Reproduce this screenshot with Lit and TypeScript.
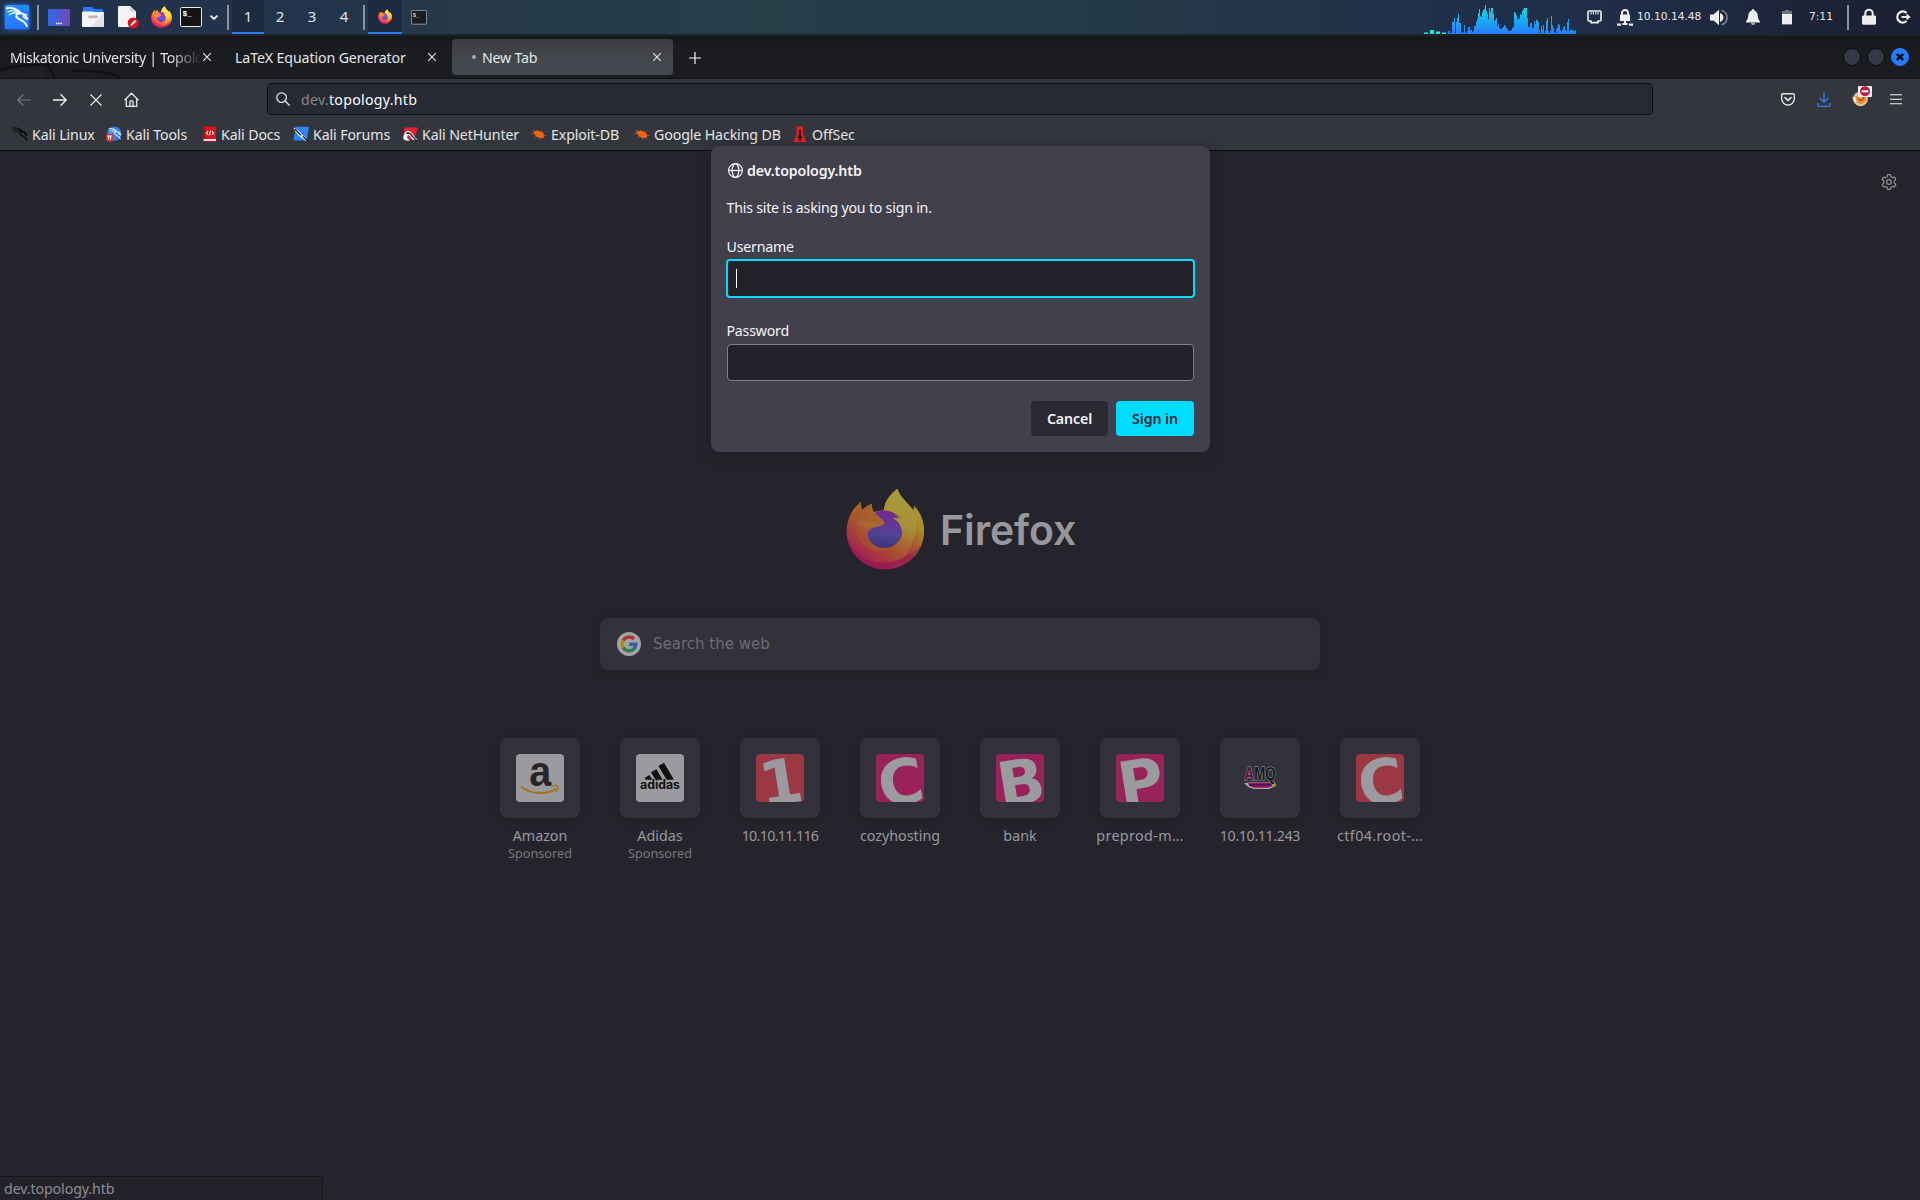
import { LitElement, html, svg, css } from "lit";
import { customElement } from "lit/decorators.js";
import { classMap } from "lit/directives/class-map.js";

const firefoxMark = (id: string) => svg`
  <defs>
    <linearGradient id="${id}-body" x1="0.85" y1="0.1" x2="0.25" y2="0.95">
      <stop offset="0" stop-color="#fff04e"></stop><stop offset="0.3" stop-color="#ffc62a"></stop>
      <stop offset="0.55" stop-color="#ff8a2b"></stop><stop offset="0.8" stop-color="#ff4a4a"></stop>
      <stop offset="1" stop-color="#f0137c"></stop>
    </linearGradient>
    <linearGradient id="${id}-globe" x1="0.5" y1="0" x2="0.4" y2="1">
      <stop offset="0" stop-color="#a82ed6"></stop><stop offset="0.6" stop-color="#7355e0"></stop>
      <stop offset="1" stop-color="#4a3fa8"></stop>
    </linearGradient>
    <linearGradient id="${id}-flame" x1="0.6" y1="0" x2="0.4" y2="1">
      <stop offset="0" stop-color="#fff04e"></stop><stop offset="0.6" stop-color="#ffd63c"></stop>
      <stop offset="1" stop-color="#ff7a35"></stop>
    </linearGradient>
    <linearGradient id="${id}-face" x1="0.9" y1="0" x2="0.1" y2="1">
      <stop offset="0" stop-color="#ffa02e"></stop><stop offset="0.5" stop-color="#ff8030"></stop>
      <stop offset="1" stop-color="#ff4f45"></stop>
    </linearGradient>
  </defs>
  <path fill="url(#${id}-body)" d="M122 94C121 104 122 112 126 119C134 110 143 104 155 101C154 110 156 118 160 125L192 119C194 90 210 74 232 55C240 82 262 96 281 120L283 106C303 128 313 154 313 184C313 248 261 299 196 299C131 299 78 248 78 185C78 146 94 116 122 94Z"></path>
  <path fill="#e0106f" d="M79 195C92 240 122 272 166 278C222 285 276 262 303 222C288 268 248 299 196 299C132 299 83 254 79 195Z" opacity="0.75"></path>
  <circle fill="url(#${id}-globe)" cx="192" cy="178" r="57"></circle>
  <path fill="url(#${id}-flame)" d="M192 120C193 91 210 74 232 55C240 82 265 97 281 124C294 148 298 172 287 200C276 226 256 240 220 242C240 228 250 208 246 184C243 166 233 150 218 145C226 141 238 142 245 147C235 127 215 119 192 120Z"></path>
  <path fill="url(#${id}-body)" d="M281 106C303 128 313 154 313 184C312 222 290 258 248 270C278 236 291 192 290 136C287 128 283 116 281 106Z" opacity="0.7"></path>
  <path fill="url(#${id}-face)" d="M122 94C121 104 122 112 126 119C134 110 143 104 155 101C153 112 156 120 163 128C174 140 187 147 195 159C186 168 172 169 157 174C144 179 138 190 145 206C152 226 176 238 204 235C190 250 150 248 125 220C105 198 96 168 108 154C98 145 104 110 122 94Z"></path>
  <path fill="#ffbd45" opacity="0.4" d="M108 157C120 149 142 150 159 158C172 163 184 162 194 159C180 171 164 168 150 175C134 174 116 170 108 157Z"></path>
`;

const dragon = (color: string) => svg`
  <g fill="none" stroke="${color}" stroke-linecap="round" stroke-linejoin="round">
    <path stroke-width="2" d="M1.8 3.6C5 1.8 12 3.6 16.5 8.2"></path>
    <path stroke-width="1.2" d="M3 7.2C7 5 11.5 5.7 16 9M4.5 10.3C7.5 7.8 11 7.6 14.5 9.4"></path>
    <path stroke-width="2" d="M16.5 8.2C14 8.2 11.6 9.6 11.8 12C12.4 15.8 21 14.6 22.6 22"></path>
    <path stroke-width="1.9" d="M16 8.7C19.6 8.4 20.2 11.4 23.4 14"></path>
    <path stroke-width="1.3" d="M19.5 10L18.8 12.3L22.8 15.2M19 9L22.4 10.5"></path>
  </g>`;

const terminal = html`<svg viewBox="0 0 22 20">
  <rect x="0.5" y="0.5" width="21" height="19" rx="1.2" fill="#141414" stroke="#e9e9e9"></rect>
  <text class="prompt" x="2.4" y="9.4">$_</text>
</svg>`;

const closeGlyph = html`<svg class="close" viewBox="0 0 10 10"><path d="M1.2 1.2L8.8 8.8M8.8 1.2L1.2 8.8" stroke="#e4e4e6" stroke-width="1.1" fill="none"></path></svg>`;

const spider = html`<svg class="fav" viewBox="0 0 16 16">
  <path d="M1 4L5 6M0.5 7.5L4 7.5M3.5 12L6 10M6 3.5L7.5 5.5M10 5L13 7.5M15.5 9.5L12.5 9.5M14 13.5L11.5 11.5M9 14L9 11.5" stroke="#a8501c" stroke-width="0.9" fill="none"></path>
  <ellipse cx="8.2" cy="8.4" rx="5.4" ry="3.1" transform="rotate(26 8.2 8.4)" fill="#f26412"></ellipse>
  <path d="M2 5.5L5.5 5.3L4.5 8.6Z" fill="#f26412"></path>
</svg>`;

interface Bookmark { label: string; width: number; icon: unknown; }

const bookmarks: Bookmark[] = [
  { label: "Kali Linux", width: 94, icon: html`<svg class="fav" viewBox="0 0 25 25">${dragon("#0b0b0d")}</svg>` },
  { label: "Kali Tools", width: 95, icon: html`<svg class="fav" viewBox="0 0 16 16">
      <circle cx="8.3" cy="7.6" r="7.2" fill="#2f7df0"></circle>
      <g transform="translate(2 1) scale(.54)">${dragon("#d9e8ff")}</g>
      <rect x="0" y="8" width="7.2" height="7.6" rx="2.6" fill="#e2332f"></rect>
      <path d="M1.4 10H5.8M2.7 10V13.6M4.6 10V13.6" stroke="#fff" stroke-width="1" fill="none"></path></svg>` },
  { label: "Kali Docs", width: 92, icon: html`<svg class="fav" viewBox="0 0 16 16">
      <path d="M2.6 0.4H15V13H2.6Z" fill="#dc1216"></path><path d="M2.6 0.4H4V13H2.6Z" fill="#a90d10"></path>
      <path d="M2.6 13H15V15.2H2.6Z" fill="#e8e0df"></path><path d="M2.6 15H15V16H2.6Z" fill="#b31114"></path>
      <path d="M7 5.2L5.5 7L7 8.8M11 5.2L12.5 7L11 8.8M9.6 4.6L8.4 9.4" stroke="#fff" stroke-width="1.1" fill="none"></path></svg>` },
  { label: "Kali Forums", width: 109, icon: html`<svg class="fav" viewBox="0 0 16 16">
      <path d="M2.5 0.8H16L13.8 14.6H0.6Z" fill="#2c86f4"></path>
      <path d="M0.4 1.4C3 2.3 7 5 9 8.6L12.6 11.6L13.6 15.6L9.6 12.4C6.6 11 3.6 8 0.4 1.4Z" fill="#f2f2f2"></path>
      <path d="M2 3L8 9.4M10 10.5L15.4 15.8" stroke="#17191d" stroke-width="1.2" fill="none"></path></svg>` },
  { label: "Kali NetHunter", width: 129, icon: html`<svg class="fav" viewBox="0 0 16 16">
      <path d="M2.4 1.4H16L12 13L1 14Z" fill="#e32430"></path>
      <path d="M1.2 11.6C3 3.6 7.2 3.4 10 7.2C12 9.8 13 12 15.6 13.6C12 15 9 13.6 8.2 10.8C7 8.4 5 9 5.2 11.2C5.6 13 7 13.6 8 14.6C4.6 15.4 1.6 14.4 1.2 11.6Z" fill="#f4f4f4"></path>
      <path d="M4.4 7.6C7 5.8 9 8.2 10.6 10.6L15.4 15.4" stroke="#18181b" stroke-width="1.3" fill="none"></path></svg>` },
  { label: "Exploit-DB", width: 103, icon: spider },
  { label: "Google Hacking DB", width: 158, icon: spider },
  { label: "OffSec", width: 90, icon: html`<svg class="fav" viewBox="0 0 16 16">
      <path d="M4.6 0.4H11V8L14.6 16H1.2L4.6 8.6Z" fill="#e81f26"></path>
      <path d="M7.9 3.4L9 4.6L8.7 8.4L10.6 12L9 11.6V14.6H6.8V11.6L5.2 12L7.1 8.4L6.8 4.6Z" fill="#1a0c10"></path></svg>` },
];

const spectrum = [
  3, 3, 1, 1, 12, 12, 16, 1, 12, 16, 20, 11, 11, 2, 1, 2, 9, 2, 1, 3, 7, 7, 4, 4, 2, 3, 8, 8, 12, 15,
  21, 25, 18, 17, 22, 24, 25, 29, 23, 20, 15, 26, 22, 26, 26, 20, 13, 14, 16, 8, 10, 6, 5, 5, 6, 7,
  9, 8, 6, 5, 3, 3, 3, 4, 6, 7, 22, 21, 19, 14, 16, 15, 20, 19, 23, 25, 26, 26, 26, 16, 7, 7, 11, 11,
  6, 6, 13, 10, 14, 14, 12, 4, 1, 8, 5, 9, 1, 4, 13, 16, 3, 1, 3, 18, 9, 6, 2, 1, 5, 7, 10, 9, 4,
  2, 4, 7, 8, 4, 3, 12, 15, 3, 4, 5, 4, 3, 3, 4, 2, 2, 3, 4, 2,
];

interface Tile { title: string; fit?: string; sponsored?: boolean; icon: unknown; }

const letterIcon = (letter: string, color: string) =>
  html`<div class=${classMap({ art: true, [color]: true })}><span class="glyph">${letter}</span></div>`;

const tiles: Tile[] = [
  { title: "Amazon", sponsored: true, icon: html`<div class="art plain"><svg viewBox="0 0 48 48">
      <text class="amazon" x="13.2" y="31.6" textLength="22" lengthAdjust="spacingAndGlyphs">a</text>
      <path d="M5 32.5C15 40.5 30 41 40.5 34.6" stroke="#a5741a" stroke-width="2.2" fill="none"></path>
      <path d="M35 32.4C39 31 42.6 31.4 42 33.6C41.6 35.6 40.8 37 39.6 38.4" stroke="#a5741a" stroke-width="1.4" fill="none"></path></svg></div>` },
  { title: "Adidas", sponsored: true, icon: html`<div class="art plain"><svg viewBox="0 0 48 48">
      <path fill="#111" d="M8.6 24L13.4 21L16.4 25.8H9.6ZM15 18.2L20.4 15.2L26.6 25.8H19.6ZM22.4 12L28 8.7L38 25.8H30.6Z"></path>
      <text class="adidas" x="4" y="35.2" textLength="40" lengthAdjust="spacingAndGlyphs">adidas</text></svg></div>` },
  { title: "10.10.11.116", fit: "tight", icon: letterIcon("1", "red") },
  { title: "cozyhosting", icon: letterIcon("C", "pink") },
  { title: "bank", icon: letterIcon("B", "pink") },
  { title: "preprod-m…", fit: "loose", icon: letterIcon("P", "pink") },
  { title: "10.10.11.243", fit: "snug", icon: html`<div class="art"><svg viewBox="0 0 48 48">
      <path d="M8 29.2L13 28.4H39L40 32L33 35H18L13 33.4Z" fill="#a7a5aa"></path>
      <path d="M12 29H37L38.4 31.4L32 33.8H18L13.4 32Z" fill="#a3154a"></path>
      <path d="M13 31H35" stroke="#33146e" stroke-width="1.4"></path><path d="M36 30H39V32H36Z" fill="#a88d1f"></path>
      <text class="amq" x="8.6" y="26.4" textLength="31" lengthAdjust="spacingAndGlyphs"><tspan class="a">A</tspan>MQ</text></svg></div>` },
  { title: "ctf04.root-…", fit: "loose", icon: letterIcon("C", "red") },
];

@customElement("desktop-panel")
class DesktopPanel extends LitElement {
  static styles = css`
    :host { display: block; }
    svg { display: block; flex: none; overflow: visible; }
    .panel { display: flex; justify-content: space-between; height: 34px; color: #e6e7ea;
      background: linear-gradient(90deg, #203048 0, #22344c 16%, #263a48 24%, #273e49 40%, #253a48 58%, #20304a 75%, #1f2c45 86%, #1c2133 97%); }
    .left { display: flex; align-items: center; }
    .kali { width: 24px; height: 24px; margin: 0 8px 0 5px; background: linear-gradient(160deg, #2196ff, #256dff); box-shadow: 0 0 4px #277bff; border-radius: 1px; }
    .sep { width: 2px; height: 25px; background: #8b939e; flex: none; }
    .desktop { width: 22px; height: 17px; margin: 0 12px 0 9px; }
    .folder { width: 22px; height: 20px; margin-right: 14px; }
    .doc { width: 21px; height: 22px; margin-right: 12px; }
    .ff { width: 21px; height: 22px; margin-right: 8px; }
    .term { width: 22px; height: 20px; }
    .chev { width: 8px; height: 5px; margin: 0 9px 0 8px; }
    .work { display: flex; align-self: stretch; margin: 0 3px 0 3px; }
    .cell { width: 32px; height: 34px; box-sizing: border-box; text-align: center; font: 15px/33px "Noto Sans", sans-serif; color: #dfe3ea; }
    .cell.on, .task.on { background: #1d2a40; border-bottom: 2px solid #2a7cff; }
    .task { width: 34px; height: 34px; box-sizing: border-box; display: flex; align-items: center; justify-content: center; }
    .task.on { padding-top: 1px; margin-left: 3px; }
    .task .ff { width: 14px; height: 15px; margin: 0; }
    .task .term { width: 16px; height: 14px; opacity: .75; }
    .prompt { font: bold 8px "Liberation Mono", monospace; fill: #fff; }
    .right { display: flex; align-items: center; font: 10.67px "DejaVu Sans", sans-serif; }
    .graph { width: 152px; height: 34px; margin-right: 11px; }
    .net { width: 15px; height: 14px; margin-right: 15px; }
    .vpn { width: 16px; height: 17px; }
    .ip { width: 65px; margin: -1px 8px 0 4px; white-space: nowrap; }
    .vol { width: 18px; height: 17px; margin-right: 18px; }
    .bell { width: 14px; height: 16px; margin-right: 22px; }
    .bat { width: 10px; height: 15px; margin-right: 17px; }
    .clock { margin-top: -1px; width: 38px; }
    .lock { width: 14px; height: 16px; margin: 0 20px 0 13px; }
    .out { width: 15px; height: 14px; margin-right: 9px; }
  `;
  render() {
    return html`<div class="panel">
      <div class="left">
        <div class="kali"><svg viewBox="0 0 25 25">${dragon("#fff")}</svg></div>
        <div class="sep"></div>
        <svg class="desktop" viewBox="0 0 22 17"><defs><linearGradient id="dg"><stop stop-color="#2f6be6"></stop><stop offset="1" stop-color="#7048b0"></stop></linearGradient></defs>
          <rect width="22" height="17" rx="1" fill="url(#dg)"></rect><path d="M8 14.5H14" stroke="#fff" stroke-width="1.6" stroke-dasharray="1.5 .7"></path></svg>
        <svg class="folder" viewBox="0 0 22 20"><path d="M1 6V1.2Q1 0 2.2 0H10L12.5 2H19.8Q21 2 21 3.2V6Z" fill="#2777ff"></path>
          <path d="M0 5.5Q0 4.6 1 4.6H10L12 5H21Q22 5 22 6V18.8Q22 20 20.8 20H1.2Q0 20 0 18.8Z" fill="#f4f4f4"></path>
          <path d="M22 5V18.8Q22 20 20.8 20H9Z" fill="#e3e3e3"></path><rect x="6" y="8.4" width="10" height="2.8" rx="1.4" fill="#b9b9b9"></rect></svg>
        <svg class="doc" viewBox="0 0 21 22"><path d="M0 1Q0 0 1 0H12L18 5.5V20Q18 21 17 21H1Q0 21 0 20Z" fill="#f3f3f3"></path><path d="M12 0L18 5.5H12Z" fill="#cfcfcf"></path>
          <circle cx="15.3" cy="17" r="5.6" fill="#d3141c"></circle><path d="M12.8 19.4L17.8 14.5" stroke="#fff" stroke-width="2"></path></svg>
        <svg class="ff" viewBox="76 52 240 250">${firefoxMark("a")}</svg>
        <div class="term">${terminal}</div>
        <svg class="chev" viewBox="0 0 8 5"><path d="M.6.6L4 4L7.4.6" stroke="#f0f0f0" stroke-width="1.8" fill="none"></path></svg>
        <div class="sep"></div>
        <div class="work">${["1", "2", "3", "4"].map((n) => html`<div class=${classMap({ cell: true, on: n === "1" })}>${n}</div>`)}</div>
        <div class="sep"></div>
        <div class="task on"><svg class="ff" viewBox="76 52 240 250">${firefoxMark("b")}</svg></div>
        <div class="task"><div class="term">${terminal}</div></div>
      </div>
      <div class="right">
        <svg class="graph" viewBox="0 0 152 34" shape-rendering="crispEdges"><defs><linearGradient id="sp" gradientUnits="userSpaceOnUse" x1="0" y1="2" x2="0" y2="34"><stop stop-color="#08eddc"></stop><stop offset="1" stop-color="#277bff"></stop></linearGradient></defs>
          <path d="M0 32H4V33H0ZM12 31H16V32H12ZM18 32H22V33H18Z" fill="#1b8f94"></path>
          <path d="M0 33H4V34H0ZM6 30H10V34H6ZM12 32H16V34H12ZM18 33H22V34H18Z" fill="#06f2da"></path>
          ${spectrum.slice(0, 128).map((h, i) => svg`<rect x="${24 + i}" y="${34 - h}" width="1" height="${h}" fill="url(#sp)"></rect>`)}</svg>
        <svg class="net" viewBox="0 0 15 14"><path d="M2 1H13Q14 1 14 2V10Q14 11 13 11H11V12.6H4V11H2Q1 11 1 10V2Q1 1 2 1Z" stroke="#eee" stroke-width="1.6" fill="none"></path><path d="M4 2V4.6M6.3 2V4.6M8.7 2V4.6M11 2V4.6" stroke="#eee" stroke-width="1.1"></path></svg>
        <svg class="vpn" viewBox="0 0 16 17"><path d="M3 5.5H13V12H3Z" fill="#eee"></path><path d="M5 6V4A3 3 0 0 1 11 4V6" stroke="#eee" stroke-width="1.9" fill="none"></path><path d="M8 11.5V15M0 15.6H4M5.4 15H10.6M12 15.6H16" stroke="#eee" stroke-width="2.1"></path></svg>
        <div class="ip">10.10.14.48</div>
        <svg class="vol" viewBox="0 0 18 17"><path d="M0 5.5H3.5L9 0.8V16.2L3.5 11.5H0Z" fill="#eee"></path><path d="M10.5 4.5A4.4 4.4 0 0 1 10.5 12.5Z" fill="#eee" stroke="#eee"></path><path d="M11.5 1.2A7.6 7.6 0 0 1 11.5 15.8" stroke="#7c828e" stroke-width="1.6" fill="none"></path></svg>
        <svg class="bell" viewBox="0 0 14 16"><path d="M7 0Q8.3 0 8.3 1.4Q11.6 2.6 11.8 7Q12 11 14 12.6V13.4H0V12.6Q2 11 2.2 7Q2.4 2.6 5.7 1.4Q5.7 0 7 0ZM5 14.2H9Q8.6 15.8 7 15.8Q5.4 15.8 5 14.2Z" fill="#eee"></path></svg>
        <svg class="bat" viewBox="0 0 10 15"><path d="M0 4V1H3V0H7V1H10V4Z" fill="#6d7280"></path><path d="M0 4H10V14.4H0Z" fill="#eee"></path></svg>
        <div class="clock">7:11</div>
        <div class="sep"></div>
        <svg class="lock" viewBox="0 0 14 16"><rect y="6.5" width="14" height="9.2" rx="1.4" fill="#eee"></rect><path d="M3.3 7V4.4A3.7 3.7 0 0 1 10.7 4.4V7" stroke="#eee" stroke-width="2" fill="none"></path></svg>
        <svg class="out" viewBox="0 0 15 14"><path d="M10.6 3A5.5 5.5 0 1 0 10.6 11" stroke="#eee" stroke-width="2.3" fill="none"></path><path d="M5.5 7H12" stroke="#eee" stroke-width="2"></path><path d="M10.5 3.6L14.6 7L10.5 10.4Z" fill="#eee"></path></svg>
      </div>
    </div>`;
  }
}

@customElement("browser-chrome")
class BrowserChrome extends LitElement {
  static styles = css`
    :host { display: block; font: 14.2px/20px "Noto Sans", sans-serif; letter-spacing: -0.12px; color: #e4e5e7; }
    svg { display: block; flex: none; overflow: visible; }
    .tabs { display: flex; align-items: center; height: 45px; box-sizing: border-box; border-top: 2px solid #1e2425; border-bottom: 1px solid #131418;
      background: linear-gradient(180deg, #16171a, #1b1c20 14px); position: relative; }
    .tabs > * { z-index: 1; }
    .tabs > .art { position: absolute; left: 0; bottom: 0; width: 120px; height: 14px; z-index: 0; overflow: hidden; }
    .tab { height: 36px; display: flex; align-items: center; white-space: nowrap; }
    .t1 { width: 225px; box-sizing: border-box; padding-left: 10px; }
    .t2 { width: 227px; box-sizing: border-box; padding-left: 10px; }
    .name { width: 190px; overflow: hidden; padding-top: 2px; }
    .t1 .name { letter-spacing: -.3px; -webkit-mask-image: linear-gradient(90deg, #000 160px, transparent 192px); mask-image: linear-gradient(90deg, #000 160px, transparent 192px); }
    .close { width: 10px; height: 10px; margin-left: 2px; margin-top: -1px; }
    .t3 { width: 221px; border-radius: 4px; box-sizing: border-box; background: linear-gradient(180deg, #3c3d41, #44474e 60%); padding-left: 20px; }
    .t3 .dot { width: 4px; height: 4px; border-radius: 2px; background: #a9aaae; margin: 0 6px 0 0; }
    .t3 .name { width: 168px; letter-spacing: -.2px; }
    .plus { width: 12px; height: 12px; margin: 1px 0 0 16px; }
    .wins { display: flex; gap: 6px; margin-left: auto; margin-right: 11px; }
    .win { width: 18px; height: 18px; box-sizing: border-box; border-radius: 9px; border: 1px solid #08090b; background: #343945; }
    .win.x { border-color: #277bff; background: #277bff; }
    .bar { display: flex; align-items: center; height: 40px; background: #33363d; }
    .nav { display: flex; align-items: center; padding-left: 17px; width: 250px; }
    .nav svg { height: 14px; margin-top: 2px; }
    .fwd { margin-left: 22px; }
    .stop { margin-left: 23px; }
    .home { margin-left: 22px; }
    .url { width: 1386px; height: 32px; box-sizing: border-box; border: 1px solid #121317; border-radius: 4px; background: #272933; display: flex; align-items: center; padding-left: 8px; white-space: pre; letter-spacing: .26px; }
    .url span { padding-top: 2px; }
    .mag { width: 14px; height: 14px; margin: -1px 11px 0 0; }
    .dim { color: #85868c; }
    .host { color: #fbfbfe; }
    .tools { display: flex; margin-left: auto; align-items: center; margin-right: 18px; padding-top: 1px; }
    .down { margin-left: 22px; }
    .proxy { margin: -7px 18px 0 21px; }
    .marks { display: flex; height: 31px; background: #33363d; border-bottom: 1px solid #0e0f11; padding-left: 12px; align-items: flex-start; }
    .mark { display: flex; align-items: center; gap: 4px; height: 30px; white-space: nowrap; flex: none; }
    .mark span { padding-top: 1px; }
    .fav { width: 16px; height: 16px; }
  `;
  render() {
    return html`
      <div class="tabs">
        <svg class="art" viewBox="0 0 120 14"><path d="M0 6Q24 -1 48 1L55 14M0 11Q24 5 42 5L46 14M72 7Q105 6 120 13" stroke="#101114" stroke-width="2.4" fill="none"></path><path d="M0 8Q25 3 44 3L48 14H0Z" fill="#222327" opacity=".7"></path></svg>
        <div class="tab t1"><span class="name">Miskatonic University | Topology</span>${closeGlyph}</div>
        <div class="tab t2"><span class="name">LaTeX Equation Generator</span>${closeGlyph}</div>
        <div class="tab t3"><span class="dot"></span><span class="name">New Tab</span>${closeGlyph}</div>
        <svg class="plus" viewBox="0 0 12 12"><path d="M6 0V12M0 6H12" stroke="#f4f4f6" stroke-width="1.2"></path></svg>
        <div class="wins"><div class="win"></div><div class="win"></div><div class="win x"><svg viewBox="0 0 16 16"><path d="M4.8 5L11.2 11M11.2 5L4.8 11" stroke="#10131a" stroke-width="2.4"></path></svg></div></div>
      </div>
      <div class="bar">
        <div class="nav">
          <svg width="14" viewBox="0 0 14 14"><path d="M14 7H.8M6.5 1.2L.8 7L6.5 12.8" stroke="#76787e" stroke-width="1.2" fill="none"></path></svg>
          <svg class="fwd" width="14" viewBox="0 0 14 14"><path d="M0 7H13.2M7.5 1.2L13.2 7L7.5 12.8" stroke="#f0f0f2" stroke-width="1.3" fill="none"></path></svg>
          <svg class="stop" width="12" viewBox="0 0 12 14"><path d="M.4 1.4L11.6 12.6M11.6 1.4L.4 12.6" stroke="#f0f0f2" stroke-width="1.3" fill="none"></path></svg>
          <svg class="home" width="15" viewBox="0 0 15 14"><path d="M.5 7.2L7.5 .2L14.5 7.2M2.3 6V13.4H12.7V6M6 13V8.6Q6 7.8 7 7.8H8Q9 7.8 9 8.6V13" stroke="#e6e6e8" stroke-width="1.3" fill="none" stroke-linejoin="round"></path></svg>
        </div>
        <div class="url"><svg class="mag" viewBox="0 0 14 14"><circle cx="5.6" cy="5.6" r="4.8" stroke="#e0e0e3" stroke-width="1.3" fill="none"></circle><path d="M9.1 9.1L13.6 13.6" stroke="#e0e0e3" stroke-width="1.4"></path></svg><span class="dim">dev.</span><span class="host">topology.htb</span></div>
        <div class="tools">
          <svg width="14" height="13" viewBox="0 0 14 13"><path d="M1.8 .7H12.2Q13.3 .7 13.3 1.8V5.7A6.3 6.3 0 0 1 .7 5.7V1.8Q.7 .7 1.8 .7Z" stroke="#e2e3e6" stroke-width="1.4" fill="none"></path><path d="M4 4.6L7 7.4L10 4.6" stroke="#e2e3e6" stroke-width="1.5" fill="none" stroke-linecap="round"></path></svg>
          <svg class="down" width="14" height="15" viewBox="0 0 14 15"><path d="M7 0V10M2.6 6L7 10.2L11.4 6M.7 11V12.6Q.7 14.3 2.4 14.3H11.6Q13.3 14.3 13.3 12.6V11" stroke="#3080f0" stroke-width="1.3" fill="none"></path></svg>
          <svg class="proxy" width="20" height="21" viewBox="0 0 20 21"><circle cx="8.5" cy="12.8" r="7.4" fill="#d8c3a4"></circle><path d="M0 11L5 12L3 17Z" fill="#f0e9e0"></path><path d="M3.6 9.6L8 11.4L13 9L14.2 14Q12 18 8 18Q4 17 3.6 9.6Z" fill="#f58a24"></path><path d="M6 13L10 14.6L12 11" stroke="#7d4a1c" stroke-width="1" fill="none"></path><rect x="6" y="0" width="14" height="11" rx="1" fill="#fbf4f5"></rect><circle cx="13" cy="5.3" r="5" fill="#c8163a"></circle><path d="M9.7 5.3H16.3" stroke="#fff" stroke-width="2"></path></svg>
          <svg width="12" height="11" viewBox="0 0 12 11"><path d="M0 .8H12M0 5.3H12M0 9.8H12" stroke="#f2f2f4" stroke-width="1.1"></path></svg>
        </div>
      </div>
      <div class="marks">${bookmarks.map((b) => html`<div class="mark" style="width:${b.width}px">${b.icon}<span>${b.label}</span></div>`)}</div>`;
  }
}

@customElement("new-tab-page")
class NewTabPage extends LitElement {
  static styles = css`
    :host { display: block; }
    svg { display: block; }
    .page { height: 1049px; box-sizing: border-box; background: #25242c; display: flex; flex-direction: column; align-items: center; font-family: "Noto Sans", sans-serif; }
    .gear { align-self: flex-end; width: 16px; height: 16px; margin: 23px 23px 0 0; }
    .brand { display: flex; height: 82px; margin-top: 298px; margin-left: 4px; width: 232px; }
    .logo { width: 79px; height: 82px; opacity: .6; flex: none; }
    .word { font: 600 41px/50px "Inter", sans-serif; letter-spacing: -.1px; color: #98979c; margin: 17px 0 0 15px; }
    .search { margin-top: 48px; width: 720px; height: 52px; box-sizing: border-box; border-radius: 8px; background: #33313b; box-shadow: 0 2px 6px #1f1e2488; display: flex; align-items: center; padding-left: 17px; font: 15px "DejaVu Sans", sans-serif; color: #6e6d76; gap: 12px; }
    .sites { display: grid; grid-template-columns: repeat(8, 120px); margin-top: 68px; text-align: center; }
    .site { display: flex; flex-direction: column; align-items: center; }
    .card { width: 80px; height: 80px; border-radius: 8px; background: #33313b; box-shadow: 0 2px 6px #1f1e2488; display: flex; align-items: center; justify-content: center; }
    .art { width: 48px; height: 48px; border-radius: 4px; overflow: hidden; color: #9b9a9e; }
    .plain { background: #9b9a9e; }
    .red { background: #9b3844; }
    .pink { background: #982259; }
    .glyph { display: flex; justify-content: center; font: bold 62px/48px "DejaVu Sans", sans-serif; transform: translate(1px, 5px) rotate(-9deg); }
    .amazon { font: bold 43px "Liberation Sans", sans-serif; fill: #27242a; }
    .adidas { font: bold 12.5px "Inter", sans-serif; fill: #111; }
    .amq { font: bold 18.5px "Liberation Sans", sans-serif; fill: #17161b; stroke: #a7a5aa; stroke-width: 1px; paint-order: stroke; }
    .amq .a { fill: #5d1238; }
    .title { font-size: 14.3px; line-height: 20px; margin-top: 8px; color: #99989d; white-space: nowrap; }
    .tight { letter-spacing: -.7px; }
    .snug { letter-spacing: -.4px; }
    .loose { letter-spacing: .4px; }
    .sub { font-size: 12.7px; line-height: 16px; margin-top: -1px; color: #75747b; }
  `;
  render() {
    return html`<div class="page">
      <svg class="gear" viewBox="0 0 16 16"><path d="M6.6 .7H9.4L9.9 2.8L11.3 3.6L13.4 3L14.8 5.4L13.3 7V9L14.8 10.6L13.4 13L11.3 12.4L9.9 13.2L9.4 15.3H6.6L6.1 13.2L4.7 12.4L2.6 13L1.2 10.6L2.7 9V7L1.2 5.4L2.6 3L4.7 3.6L6.1 2.8Z" stroke="#929198" stroke-width="1.2" fill="none" stroke-linejoin="round"></path><circle cx="8" cy="8" r="2.4" stroke="#929198" stroke-width="1.2" fill="none"></circle></svg>
      <div class="brand"><svg class="logo" viewBox="76 54 240 246">${firefoxMark("c")}</svg><div class="word">Firefox</div></div>
      <div class="search"><svg width="24" height="24" viewBox="0 0 24 24"><circle cx="12" cy="12" r="12" fill="#a3a2a6"></circle>
        <g fill="none" stroke-width="3.4"><path d="M6.2 8.5A6.9 6.9 0 0 1 17 7" stroke="#a8352f"></path><path d="M6.2 15.6A6.9 6.9 0 0 1 6.2 8.4" stroke="#b08a12"></path><path d="M16.6 17.2A6.9 6.9 0 0 1 6.2 15.6" stroke="#257f3d"></path><path d="M12.2 12.2H18.9A6.9 6.9 0 0 1 16.6 17.2" stroke="#355fa8"></path></g></svg>Search the web</div>
      <div class="sites">${tiles.map((t) => html`<div class="site"><div class="card">${t.icon}</div><div class="title ${t.fit ?? ""}">${t.title}</div>${t.sponsored ? html`<div class="sub">Sponsored</div>` : ""}</div>`)}</div>
    </div>`;
  }
}

@customElement("sign-in-dialog")
class SignInDialog extends LitElement {
  static styles = css`
    :host { display: block; }
    .dialog { width: 499px; height: 306px; box-sizing: border-box; padding: 15px 15px 0; border-radius: 8px; background: #42404c; box-shadow: 0 2px 14px #0e0d1266; color: #f4f4f8; font: 14.2px/20px "Noto Sans", sans-serif; letter-spacing: -.22px; }
    .head { display: flex; align-items: center; gap: 4px; font-weight: 600; padding-left: 2px; letter-spacing: -.12px; }
    .head svg { margin-top: -1px; }
    .text { margin: 17px 0 19px .5px; }
    .label { margin-left: .5px; }
    .field { box-sizing: border-box; background: #23222b; border-radius: 4px; }
    .focus { height: 39px; margin: 2px 0 23px; border: 2px solid #00ddff; padding: 8px 8px; }
    .caret { width: 1px; height: 19px; background: #fff; }
    .rest { height: 37px; margin: 3px 1px 20px; border: 1px solid #7f7e89; }
    .acts { display: flex; justify-content: flex-end; gap: 8px; padding-right: 1px; font-weight: 600; line-height: 35px; text-align: center; letter-spacing: -.1px; }
    .btn { width: 77px; height: 35px; border-radius: 4px; background: #2b2a33; }
    .btn.go { width: 78px; background: #00ddff; color: #2b2a33; }
  `;
  render() {
    return html`<div class="dialog">
      <div class="head"><svg width="15" height="15" viewBox="0 0 15 15"><g fill="none" stroke="#f4f4f8" stroke-width="1.2"><circle cx="7.5" cy="7.5" r="6.9"></circle><ellipse cx="7.5" cy="7.5" rx="3.3" ry="6.9"></ellipse><path d="M.6 7.5H14.4"></path></g></svg>dev.topology.htb</div>
      <div class="text">This site is asking you to sign in.</div>
      <div class="label">Username</div>
      <div class="field focus"><div class="caret"></div></div>
      <div class="label">Password</div>
      <div class="field rest"></div>
      <div class="acts"><div class="btn">Cancel</div><div class="btn go">Sign in</div></div>
    </div>`;
  }
}

@customElement("app-root")
class AppRoot extends LitElement {
  static styles = css`
    :host { display: block; }
    .screen { position: relative; width: 1920px; height: 1200px; overflow: hidden; background: #25242c; }
    .modal { position: absolute; left: 711px; top: 146px; }
    .status { position: absolute; left: 0; bottom: 0; width: 323px; height: 24px; box-sizing: border-box; border: 1px solid #16151a; border-width: 1px 1px 0 0; border-radius: 0 4px 0 0; background: #23222a; color: #8d8c92; font: 14.2px/24px "Noto Sans", sans-serif; letter-spacing: -.1px; padding-left: 4px; }
  `;
  render() {
    return html`<div class="screen">
      <desktop-panel></desktop-panel>
      <browser-chrome></browser-chrome>
      <new-tab-page></new-tab-page>
      <sign-in-dialog class="modal"></sign-in-dialog>
      <div class="status">dev.topology.htb</div>
    </div>`;
  }
}
